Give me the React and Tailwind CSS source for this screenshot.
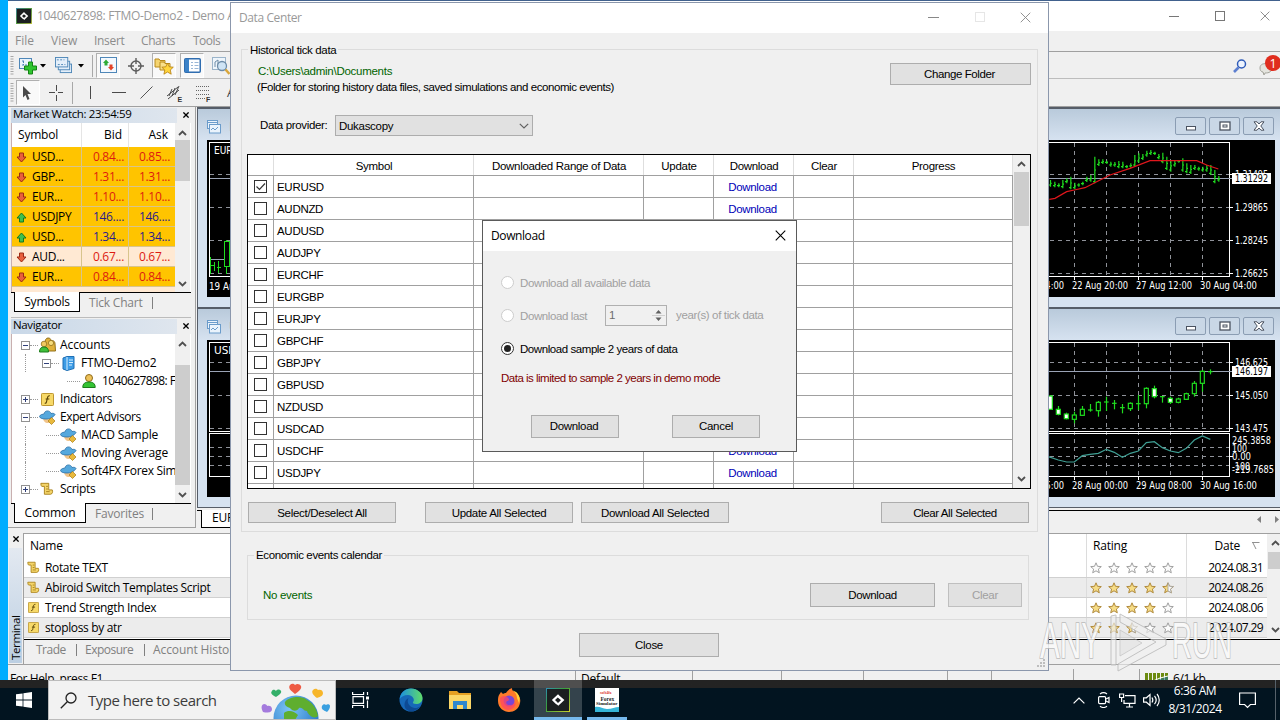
import React from 'react';
import clsx from 'clsx';

const symbols = [
  'EURUSD', 'AUDNZD', 'AUDUSD', 'AUDJPY', 'EURCHF', 'EURGBP', 'EURJPY', 'GBPCHF',
  'GBPJPY', 'GBPUSD', 'NZDUSD', 'USDCAD', 'USDCHF', 'USDJPY', '',
];

const quotes = [
  { symbol: 'USD...', bid: '0.84...', ask: '0.85...', up: false },
  { symbol: 'GBP...', bid: '1.31...', ask: '1.31...', up: false },
  { symbol: 'EUR...', bid: '1.10...', ask: '1.10...', up: false },
  { symbol: 'USDJPY', bid: '146....', ask: '146....', up: true },
  { symbol: 'USD...', bid: '1.34...', ask: '1.34...', up: true },
  { symbol: 'AUD...', bid: '0.67...', ask: '0.67...', up: false, pale: true },
  { symbol: 'EUR...', bid: '0.84...', ask: '0.84...', up: false },
];

const scripts = [
  { name: 'Rotate TEXT', kind: 'script', stars: 0, date: '2024.08.31' },
  { name: 'Abiroid Switch Templates Script', kind: 'script', stars: 4.5, date: '2024.08.26' },
  { name: 'Trend Strength Index', kind: 'indicator', stars: 4, date: '2024.08.06' },
  { name: 'stoploss by atr', kind: 'indicator', stars: 2.5, date: '2024.07.29' },
];

// [x, high, low] in thirds of a pixel
const bars = [
  [60, 540, 560], [73, 545, 562], [85, 550, 562], [97, 540, 565], [109, 535, 550], [121, 530, 568],
  [133, 548, 568], [145, 550, 560], [157, 545, 556], [169, 530, 546], [181, 525, 545], [193, 470, 550],
  [205, 478, 498], [217, 478, 492], [229, 482, 492], [241, 485, 500], [253, 486, 500], [265, 483, 505],
  [277, 485, 505], [289, 495, 505], [301, 490, 503], [313, 465, 500], [325, 460, 488], [337, 462, 480],
  [349, 452, 470], [361, 450, 465], [373, 455, 465], [385, 462, 478], [397, 458, 490], [409, 470, 510],
  [421, 480, 515], [433, 482, 500], [445, 480, 488], [457, 475, 515], [469, 490, 520], [481, 495, 522],
  [493, 495, 510], [505, 500, 512], [517, 500, 515], [529, 495, 515], [541, 495, 525], [553, 510, 550],
  [565, 528, 545],
];

// [x, high, low, bodyTop, bodyBottom, filled]
const candles = [
  [61, 286, 328, 288, 328, 1], [85, 318, 346, 328, 343, 1], [109, 338, 358, 342, 356, 1],
  [133, 335, 370, 345, 358, 0], [157, 318, 347, 328, 346, 0], [181, 312, 335, 330, 330, 0],
  [205, 303, 350, 307, 332, 0], [229, 290, 333, 306, 306, 0], [253, 300, 328, 310, 310, 0],
  [277, 312, 340, 323, 323, 0], [301, 307, 333, 310, 326, 0], [325, 285, 330, 311, 311, 0],
  [349, 262, 325, 265, 311, 0], [373, 257, 295, 266, 290, 1], [397, 288, 308, 290, 290, 0],
  [421, 290, 312, 295, 307, 1], [445, 293, 310, 297, 307, 0], [469, 278, 300, 281, 298, 0],
  [493, 243, 290, 250, 281, 0], [517, 210, 275, 214, 250, 0], [541, 208, 223, 215, 215, 0],
];

function Btn({ children, className }) {
  return (
    <button
      type="button"
      className={clsx(
        'flex shrink-0 items-center justify-center border border-[#adadad] bg-[#e1e1e1] pt-0.5 leading-none',
        className,
      )}
    >
      {children}
    </button>
  );
}

function Chevron({ down, className }) {
  return (
    <svg viewBox="0 0 9 6" className={clsx('h-1.5 w-[9px]', className)} fill="none" stroke="#505050" strokeWidth="1.8">
      <path d={down ? 'M1 1l3.5 3.5L8 1' : 'M1 5l3.5-3.5L8 5'} />
    </svg>
  );
}

function CloseGlyph({ size = 'size-3', color = '#000', width = 1 }) {
  return (
    <svg viewBox="0 0 12 12" className={size} stroke={color} strokeWidth={width} fill="none">
      <path d="M.8.8l10.4 10.4M11.2.8L.8 11.2" />
    </svg>
  );
}

function AppLogo({ className }) {
  return (
    <svg viewBox="0 0 24 24" className={className}>
      <defs>
        <linearGradient id="rim" x1="0" x2="1" y1="0" y2="1">
          <stop offset="0" stopColor="#2e8fb0" />
          <stop offset=".4" stopColor="#39a03c" />
          <stop offset="1" stopColor="#c6cf2c" />
        </linearGradient>
      </defs>
      <rect x=".5" y=".5" width="23" height="23" fill="#1b1f20" stroke="url(#rim)" />
      <path d="M12.800 7L7.500 12l3.700 3.700M12.500 8.500l4.200 3.500-5.200 5" fill="none" stroke="#fff" strokeWidth="2.300" />
    </svg>
  );
}

/* ---------- toolbar ---------- */

function Grip() {
  return (
    <svg viewBox="0 0 4 20" className="mx-[2px] h-5 w-1 shrink-0" stroke="#a6a6a6" strokeDasharray="1 1.5">
      <path d="M2 0v20" strokeWidth="3" />
    </svg>
  );
}

function Tool({ width, pressed, children }) {
  return (
    <div
      className={clsx(
        'flex h-[25px] shrink-0 items-center justify-center',
        width,
        pressed && 'border border-t-[#b0b0b0] border-l-[#b0b0b0] border-r-white border-b-white bg-[#f9f9f9]',
      )}
    >
      {children}
    </div>
  );
}

function Caret() {
  return (
    <svg viewBox="0 0 6 4" className="h-1 w-1.5 shrink-0">
      <path d="M0 0h6L3 3.6z" fill="#000" />
    </svg>
  );
}

function Toolbars() {
  return (
    <div className="flex h-[54px] shrink-0 flex-col bg-[#f0f0f0]">
      <div className="flex h-[27px] items-center border-b border-[#bdbdbd] pt-px">
        <Grip />
        <Tool width="w-[23px]">
          <svg viewBox="0 0 18 18" className="size-[18px]">
            <rect x=".5" y="1.5" width="12" height="10" fill="#eaf3fb" stroke="#4f87b8" />
            <path d="M3 4h3M3 8h6M4.500 4v4" stroke="#4f87b8" strokeDasharray="2 1" />
            <path d="M9.500 5h4v4h4v4h-4v4h-4v-4h-4V9h4z" fill="#2fc52f" stroke="#138313" />
          </svg>
        </Tool>
        <Tool width="w-2"><Caret /></Tool>
        <Tool width="w-[26px]">
          <svg viewBox="0 0 18 18" className="ml-1.5 size-[17px]" fill="#e4effa" stroke="#4f87b8">
            <rect x="5.500" y="7.500" width="12" height="9" />
            <rect x="3.500" y="4.500" width="12" height="9" />
            <rect x=".5" y=".5" width="13" height="10" />
            <path d="M2 3h8M3 8h8" strokeDasharray="2 1.500" />
          </svg>
        </Tool>
        <Tool width="w-[15px]"><Caret /></Tool>
        <div className="mr-[3px] ml-1 h-[22px] w-px shrink-0 bg-[#a8a8a8]" />
        <Tool width="w-6" pressed>
          <svg viewBox="0 0 17 17" className="size-[17px]">
            <rect x=".5" y=".5" width="16" height="15" fill="#f4f9ff" stroke="#4f87b8" />
            <path d="M6 2.500L9 6H7.500v2.500h-3V6H3z" fill="#2dab38" />
            <path d="M11 13.500L14 10h-1.500V7.500h-3V10H8z" fill="#e2452b" />
          </svg>
        </Tool>
        <Tool width="w-[32px]">
          <svg viewBox="0 0 16 16" className="size-4" fill="none" stroke="#5c5c5c" strokeWidth="1.400">
            <circle cx="8" cy="8" r="5" />
            <path d="M8 0v6M8 10v6M0 8h6M10 8h6" />
          </svg>
        </Tool>
        <Tool width="w-6" pressed>
          <svg viewBox="0 0 20 18" className="h-[18px] w-5">
            <path d="M1 2h4l1 1.500h5V10H1z" fill="#f5d470" stroke="#b88a1c" />
            <path d="M6 5h4l1 1.500h5V13H6z" fill="#fae08a" stroke="#b88a1c" />
            <path d="M13.500 6l1.800 3.800 4 .4-3 2.800.9 4.200-3.700-2.200-3.600 2.200.9-4.200-3-2.800 4-.4z" fill="#ffd53d" stroke="#b57f10" strokeWidth=".8" />
          </svg>
        </Tool>
        <div className="w-1 shrink-0" />
        <Tool width="w-6" pressed>
          <svg viewBox="0 0 17 15" className="h-[15px] w-[17px]">
            <rect x=".75" y=".75" width="15.500" height="13.500" rx="1" fill="#fff" stroke="#2f6db0" strokeWidth="1.500" />
            <path d="M1 1h4v13H1z" fill="#3b82c8" />
            <path d="M7 4.500h2M7 7.500h2M7 10.500h2M10.500 4.500h4M10.500 7.500h4M10.500 10.500h4" stroke="#9ab7d6" />
          </svg>
        </Tool>
        <Tool width="w-[34px]">
          <svg viewBox="0 0 18 18" className="size-[18px]">
            <rect x=".5" y=".5" width="13" height="12" fill="#eef5fb" stroke="#9bb4ca" />
            <path d="M3 10V5l3-2v6" fill="none" stroke="#6d8ca8" />
            <circle cx="10" cy="9" r="4.500" fill="#cfe4f5" stroke="#6d8ca8" strokeWidth="1.300" />
            <path d="M13.500 12.500l4 4.500" stroke="#d9a63a" strokeWidth="2.500" />
          </svg>
        </Tool>
        <div className="ml-auto flex w-[47px] shrink-0 items-center">
          <svg viewBox="0 0 14 14" className="size-3.5" fill="none">
            <path d="M5.500 8.500L1 13" stroke="#5d7fd0" strokeWidth="2.600" />
            <circle cx="8.500" cy="5" r="4" stroke="#2f5bb8" strokeWidth="1.500" fill="#eef4ff" />
          </svg>
          <svg viewBox="0 0 21 22" className="ml-3 h-[22px] w-[21px]">
            <path d="M1 13c0-4 4-5 8-4l4 3c0 5-3 6-7 6l-1 2-1-3c-2 0-3-2-3-4z" fill="#e4e4de" stroke="#a3a39b" />
            <circle cx="14" cy="8" r="8" fill="#e02d1e" />
            <text x="10.500" y="12.500" fontSize="12.500" fill="#fff" fontFamily="Open Sans, sans-serif">1</text>
          </svg>
        </div>
      </div>
      <div className="flex h-[27px] items-center">
        <Grip />
        <Tool width="w-6" pressed>
          <svg viewBox="0 0 12 16" className="-ml-1 h-4 w-3">
            <path d="M3 1l8 8H7.500l2 5-2 1-2-5L3 12.500z" fill="#4a4a4a" />
          </svg>
        </Tool>
        <Tool width="w-8">
          <svg viewBox="0 0 16 16" className="size-4" stroke="#4a4a4a">
            <path d="M8.500 0v6M8.500 10v6M1 7.500h6M10 7.500h5" />
          </svg>
        </Tool>
        <div className="h-[22px] w-px shrink-0 bg-[#a8a8a8]" />
        <Tool width="w-8"><div className="ml-0.5 h-[13px] w-px bg-[#4a4a4a]" /></Tool>
        <Tool width="w-[27px]"><div className="h-px w-3.5 bg-[#4a4a4a]" /></Tool>
        <Tool width="w-7">
          <svg viewBox="0 0 13 13" className="ml-px size-[13px]" stroke="#555"><path d="M.5 12.500l12-12" /></svg>
        </Tool>
        <Tool width="w-[27px]">
          <svg viewBox="0 0 17 18" className="ml-0.5 h-[18px] w-[17px]" stroke="#4a4a4a" fill="none">
            <path d="M1 12L12 3M2 15l11-9M3 12l3-7M6 12l3-8M9 11l4-9" />
            <text x="11.500" y="17.500" fontSize="7" fill="#333" stroke="none" fontWeight="bold" fontFamily="Liberation Sans, sans-serif">E</text>
          </svg>
        </Tool>
        <Tool width="w-[28px]">
          <svg viewBox="0 0 15 18" className="ml-1 h-[18px] w-[15px]" stroke="#666">
            <path d="M0 2.500h14M0 6.500h14M0 10.500h14M0 14.500h9" strokeDasharray="1 1" />
            <text x="10" y="17.500" fontSize="7" fill="#333" stroke="none" fontWeight="bold" fontFamily="Liberation Sans, sans-serif">F</text>
          </svg>
        </Tool>
        <span className="ml-3 font-['Open_Sans',sans-serif] text-[13px] text-[#444]">A</span>
      </div>
    </div>
  );
}

/* ---------- left docks ---------- */

function DockHeader({ children }) {
  return (
    <div className="flex h-4 shrink-0 items-center justify-between pr-0.5">
      <div className="flex h-[15px] w-[166px] items-center bg-gradient-to-r from-[#c9d8e8] to-[#dfe6ee] pb-0.5 pl-0.5">
        <span className="text-[11.5px] leading-none tracking-[-0.35px]">{children}</span>
      </div>
      <CloseGlyph size="size-[6px]" width={2.6} />
    </div>
  );
}

function DockTabs({ active, other, width, gap, tracking }) {
  return (
    <div className="flex h-[21px] shrink-0 items-start">
      <div className="w-[3px] border-t border-black" />
      <div className={clsx('flex h-5 items-center justify-center border border-t-0 border-black bg-white', width, tracking)}>{active}</div>
      <div className="flex h-5 flex-1 items-center border-t border-black text-[#808080]">
        <span className={clsx('tracking-[-0.2px]', gap)}>{other}</span>
        <span className="mr-[38px] ml-auto h-3 w-px bg-[#808080]" />
      </div>
    </div>
  );
}

function Scroll({ thumb }) {
  return (
    <div className="flex w-[15px] shrink-0 flex-col items-center bg-[#f0f0f0] pt-[7px] pb-[5px]">
      <Chevron />
      <div className={clsx('w-[15px] bg-[#cdcdcd]', thumb)} />
      <Chevron down className="mt-auto" />
    </div>
  );
}

function QuoteArrow({ up }) {
  return (
    <svg viewBox="0 0 11 11" className={clsx('mt-px size-[11px]', up && 'rotate-180')}>
      <path d="M3.500 1h4v4H10L5.500 10 1 5h2.500z" fill={up ? '#3fbf4f' : '#e8603c'} stroke={up ? '#14791f' : '#9c2a14'} />
    </svg>
  );
}

function MarketWatch() {
  return (
    <div className="flex h-[206px] shrink-0 flex-col">
      <DockHeader>Market Watch: 23:54:59</DockHeader>
      <div className="flex h-[169px] border-l border-[#c8b0b0] bg-white">
        <div className="w-[163px] overflow-hidden">
          <div className="flex h-6 items-center">
            <span className="w-[69px] pl-1.5 tracking-[-0.2px]">Symbol</span>
            <span className="flex h-full w-[47px] items-center justify-end border-l border-[#e5e5e5] pr-1.5">Bid</span>
            <span className="flex h-full w-[47px] items-center justify-end border-l border-[#e5e5e5] pr-[7px]">Ask</span>
          </div>
          {quotes.map((q, i) => (
            <div
              key={i}
              className={clsx(
                'flex h-5 items-center border-b border-[#d8c48c]',
                q.pale ? 'bg-[#ffe9d3]' : 'bg-[#ffc400]',
                q.up ? 'text-[#2b1a8c]' : 'text-[#dd1a10]',
              )}
            >
              <span className="flex w-[69px] items-center pl-1 tracking-[-0.3px] text-black">
                <QuoteArrow up={q.up} />
                <span className="ml-[5px]">{q.symbol}</span>
              </span>
              <span className="flex h-full w-[47px] items-center justify-end border-l border-[#d8c48c] pr-1 tracking-[-0.3px]">{q.bid}</span>
              <span className="flex h-full w-[47px] items-center justify-end border-l border-[#d8c48c] pr-[5px] tracking-[-0.3px]">{q.ask}</span>
            </div>
          ))}
          <div className="h-5 bg-[#ffe9d3]" />
        </div>
        <Scroll thumb="h-[41px] mt-[4px]" />
      </div>
      <DockTabs active="Symbols" other="Tick Chart" width="w-[66px]" gap="ml-[9px]" tracking="tracking-[-0.2px]" />
    </div>
  );
}

function Hat() {
  return (
    <svg viewBox="0 0 17 16" className="h-4 w-[17px]">
      <path d="M4 8c0 4 2 6 5 6s4-3 4-6z" fill="#f1c48a" />
      <path d="M.5 7.500C1.500 5 3.500 5.500 5 5c.5-4 6-4 7-.5 2-.5 3.500 0 4 1-2 3.500-6 4.500-9 4.500s-6-.5-6.500-2.500z" fill="#55a8dd" stroke="#2a6fa6" strokeWidth=".8" />
      <path d="M12.500 8.500l3.500 3.500-3.500 3.500L9 12z" fill="#e9b93c" stroke="#a97b12" strokeWidth=".7" />
    </svg>
  );
}

function Scroller({ className = 'size-[14px]' }) {
  return (
    <svg viewBox="0 0 16 16" className={className}>
      <path d="M1 1.500h9V9h4c1 2 0 5-2 5H5V5H2C1 4 1 2.500 1 1.500z" fill="#f3d46a" stroke="#a57c12" />
      <path d="M7 5h2M7 8h2M7 11h4" stroke="#a57c12" />
    </svg>
  );
}

function IndicatorIcon({ className = 'size-[13px]' }) {
  return (
    <svg viewBox="0 0 14 14" className={className}>
      <rect x=".5" y=".5" width="13" height="13" rx="1" fill="#f7d968" stroke="#b58d22" />
      <path d="M9.500 3C7 2.500 7 5 6.500 7S6 11.500 4 11M5 6.500h4" fill="none" stroke="#5c4508" strokeWidth="1.200" />
    </svg>
  );
}

function People() {
  return (
    <svg viewBox="0 0 17 16" className="h-4 w-[17px]">
      <path d="M6 6c0-3 1-5 3-5s3 1 3 3c2-1 4 0 4 3l.5 7H6z" fill="#e0b13a" stroke="#92701a" />
      <circle cx="12" cy="6" r="2.600" fill="#f6dc7c" stroke="#92701a" strokeWidth=".8" />
      <circle cx="5" cy="7" r="2.800" fill="#f0c860" stroke="#92701a" strokeWidth=".8" />
      <path d="M.5 15c0-3.500 1.500-5 4.500-5s4.500 1.500 4.500 5z" fill="#3fbf3a" stroke="#1c7d1a" />
    </svg>
  );
}

function Person() {
  return (
    <svg viewBox="0 0 14 16" className="h-4 w-3.5">
      <circle cx="7" cy="5" r="3.500" fill="#eec25a" stroke="#8f6a1b" />
      <path d="M.8 14.500C.8 10.500 3 9 7 9s6.200 1.500 6.200 5.500z" fill="#35c334" stroke="#1c7d1a" />
    </svg>
  );
}

function Server() {
  return (
    <svg viewBox="0 0 13 15" className="h-[15px] w-[13px]">
      <path d="M1 2l4-1.500h7v12L5 14.500 1 13z" fill="#3d9ce6" stroke="#1f6fb4" />
      <path d="M5 1v13M7 4h4M7 6.500h4M7 9h3" stroke="#d8efff" />
    </svg>
  );
}

const tree = [
  { label: 'Accounts', level: 0, icon: People, box: '-', tracking: 'tracking-[-0.1px]' },
  { label: 'FTMO-Demo2', level: 1, icon: Server, box: '-', tracking: 'tracking-[-0.2px]' },
  { label: '1040627898: FTMO', level: 2, icon: Person, tracking: 'tracking-[-0.6px]' },
  { label: 'Indicators', level: 0, icon: IndicatorIcon, box: '+', tracking: 'tracking-[-0.35px]' },
  { label: 'Expert Advisors', level: 0, icon: Hat, box: '-', tracking: 'tracking-[-0.4px]' },
  { label: 'MACD Sample', level: 1, icon: Hat, tracking: 'tracking-[-0.2px]' },
  { label: 'Moving Average', level: 1, icon: Hat, tracking: 'tracking-[-0.15px]' },
  { label: 'Soft4FX Forex Simulator', level: 1, icon: Hat, tracking: 'tracking-[-0.3px]' },
  { label: 'Scripts', level: 0, icon: Scroller, box: '+', tracking: 'tracking-[-0.3px]' },
];

function TreeBox({ mark }) {
  return (
    <svg viewBox="0 0 9 9" className="size-[9px] shrink-0" shapeRendering="crispEdges">
      <rect x=".5" y=".5" width="8" height="8" fill="#fff" stroke="#919191" />
      <path d={mark === '+' ? 'M2 4.500h5M4.500 2v5' : 'M2 4.500h5'} stroke="#30407a" />
    </svg>
  );
}

function Navigator() {
  return (
    <div className="flex h-[209px] shrink-0 flex-col border-t border-[#bcbcbc]">
      <DockHeader>Navigator</DockHeader>
      <div className="flex h-[169px] border-l border-[#c8b0b0] bg-white">
        <div className="w-[163px] overflow-hidden pt-0.5">
          {tree.map(({ label, level, icon: Icon, box, tracking }) => (
            <div key={label} className="flex h-[18px] items-center pl-[9px] whitespace-nowrap">
              {level > 0 && <span className={clsx('ml-1 h-full shrink-0', level === 1 ? 'w-[17px]' : 'w-[38px]', level === 1 && 'border-l border-dotted border-[#999]')} />}
              <span className="flex w-[17px] shrink-0 items-center">
                {box ? <TreeBox mark={box} /> : <span className="w-1" />}
                <span className="flex-1 border-t border-dotted border-[#999]" />
              </span>
              <span className="flex w-[18px] shrink-0 justify-center"><Icon /></span>
              <span className={clsx('ml-1', tracking)}>{label}</span>
            </div>
          ))}
        </div>
        <Scroll thumb="h-[120px] mt-[18px]" />
      </div>
      <DockTabs active="Common" other="Favorites" width="w-[72px]" gap="ml-[9px]" tracking="tracking-[-0.1px]" />
    </div>
  );
}

/* ---------- chart windows ---------- */

function Label({ x, y, w, children, fill = '#fff' }) {
  return (
    <text x={x} y={y} textLength={w} lengthAdjust="spacingAndGlyphs" fontSize="10.5" fill={fill} fontFamily="DejaVu Sans Condensed, Open Sans, sans-serif">
      {children}
    </text>
  );
}

function ChartTitle({ letter }) {
  return (
    <div className="flex h-[31px] shrink-0 items-center bg-gradient-to-b from-[#b9cadb] to-[#d6e2f0] pr-[1px] pl-[9px]">
      <svg viewBox="0 0 14 14" className="mt-1 size-3.5" fill="#eaf3fc" stroke="#6b9ccb">
        <rect x=".5" y=".5" width="10" height="8" />
        <rect x="2.500" y="4.500" width="11" height="8.500" />
        <path d="M1 2.500h9M4 10l2-2 2 2 3-3" />
      </svg>
      <span className="mt-1 ml-2 text-[#8796a6]">{letter}</span>
      <div className="mt-0.5 ml-auto flex gap-[3px] pr-[5px]">
        {['min', 'max', 'close'].map((kind) => (
          <div key={kind} className="flex h-[18px] w-[31px] items-center justify-center rounded-[2px] border border-[#8b9db3] bg-[#c9d7e6]">
            <svg viewBox="0 0 12 10" className="h-2.5 w-3" fill="#fff" stroke="#4a5260">
              {kind === 'min' && <rect x="1.500" y="5.500" width="9" height="3.500" />}
              {kind === 'max' && <><rect x="1" y="1" width="10" height="8" strokeWidth="1.300" /><rect x="4" y="4" width="4" height="2" /></>}
              {kind === 'close' && <path d="M1 .8h3l2 2.200 2-2.200h3L7.800 5 11 9.200H8L6 7 4 9.200H1L4.200 5z" />}
            </svg>
          </div>
        ))}
      </div>
    </div>
  );
}

function Grid({ rows, top, bottom }) {
  return (
    <g stroke="#8f9299" strokeDasharray="4 4">
      {[1074.5, 1106.5, 1138.5, 1170.5, 1202.5].map((x) => <path key={x} d={`M${x} ${top}V${bottom}`} />)}
      {rows.map((y) => <path key={y} d={`M210 ${y}H1230`} />)}
    </g>
  );
}

function BarChart() {
  return (
    <svg viewBox="207 140 1068 157" className="h-[157px] w-[1068px] bg-black" fill="none">
      <g shapeRendering="crispEdges">
        <Grid rows={[174.5, 207.5, 240.5, 273.5]} top={143} bottom={276} />
        <path d="M209.500 276.500V142.500H1229.500V276.500z" stroke="#fff" />
        <path d="M210 178.500H1232" stroke="#9aa3b5" />
        <path d="M1230 174.500h3M1230 207.500h3M1230 240.500h3M1230 273.500h3M1074.500 277v3M1138.500 277v3M1202.500 277v3" stroke="#fff" />
        <path d="M210 259.500h21" stroke="#9aa3b5" />
        <path d="M210.500 257v17M214.500 262v9M218.500 261v12M210 265.500h4M217 267.500h4M226.500 240v34" stroke="#1fdc1f" />
        <rect x="224.500" y="241.500" width="5" height="25" fill="#000" stroke="#1fdc1f" />
      </g>
      <g transform="translate(1030 0) scale(.33333)" stroke="#1fdc1f" strokeWidth="3.600">
        {bars.map(([x, hi, lo]) => (
          <path key={x} d={`M${x + 1.5} ${hi}V${lo}M${x - 4} ${lo - 5}H${x}M${x} ${(hi + lo) / 2}h5`} />
        ))}
        <path d="M58 598L75 595 110 575 133 570 165 563 200 545 240 525 300 505 360 482H500L530 495 565 507" stroke="#e0161c" />
      </g>
      <Label x={214} y={154} w={38}>EURUSD</Label>
      <Label x={209} y={290} w={56}>19 Aug 2024</Label>
      <Label x={1235} y={178} w={33}>1.31495</Label>
      <rect x="1232" y="173" width="39" height="11" fill="#fff" />
      <Label x={1235} y={182} w={33} fill="#000">1.31292</Label>
      <Label x={1235} y={211} w={33}>1.29865</Label>
      <Label x={1235} y={244} w={33}>1.28245</Label>
      <Label x={1235} y={277} w={33}>1.26625</Label>
      <Label x={1008} y={289} w={56}>19 Aug 04:00</Label>
      <Label x={1072} y={289} w={56}>22 Aug 20:00</Label>
      <Label x={1136} y={289} w={56}>27 Aug 12:00</Label>
      <Label x={1200} y={289} w={57}>30 Aug 04:00</Label>
    </svg>
  );
}

function CandleChart() {
  return (
    <svg viewBox="207 340 1068 157" className="h-[157px] w-[1068px] bg-black" fill="none">
      <g shapeRendering="crispEdges">
        <Grid rows={[362.5, 395.5, 428.5, 447.5, 456.5, 465.5]} top={343} bottom={476} />
        <path d="M209.500 431.500V342.500H1229.500V431.500zM209.500 433.500H1229.500V476.500H209.500z" stroke="#fff" />
        <path d="M210 371.500H1232" stroke="#9aa3b5" />
        <path d="M1230 362.500h3M1230 395.500h3M1230 428.500h3M1230 456.500h3M1074.500 477v3M1138.500 477v3M1202.500 477v3" stroke="#fff" />
      </g>
      <g transform="translate(1030 300) scale(.33333)" stroke="#1fdc1f" strokeWidth="3.600">
        {candles.map(([x, hi, lo, top, bottom, filled]) => (
          <g key={x}>
            <path d={`M${x + 0.5} ${hi}V${lo}`} />
            {top === bottom ? (
              <path d={`M${x - 7} ${top}h14`} />
            ) : (
              <rect x={x - 6} y={top} width="12" height={bottom - top} fill={filled ? '#fff' : '#000'} />
            )}
          </g>
        ))}
        <path
          d="M55 470L85 480 110 486H133L157 467 180 463 205 460 229 448 253 457 277 472 301 460 325 453 349 428 373 425 397 443 421 453 445 458 469 445 493 420 517 408 541 418"
          stroke="#3f9f94"
        />
      </g>
      <Label x={214} y={354} w={38}>USDJPY</Label>
      <Label x={1235} y={366} w={33}>146.625</Label>
      <rect x="1232" y="366" width="39" height="11" fill="#fff" />
      <Label x={1235} y={375} w={33} fill="#000">146.197</Label>
      <Label x={1235} y={399} w={33}>145.050</Label>
      <Label x={1235} y={432} w={33}>143.475</Label>
      <Label x={1232} y={444} w={39}>245.3858</Label>
      <Label x={1232} y={452} w={15}>100</Label>
      <Label x={1232} y={460} w={19}>0.00</Label>
      <Label x={1232} y={470} w={18}>-100</Label>
      <Label x={1232} y={473} w={42}>-219.7685</Label>
      <Label x={1008} y={489} w={56}>26 Aug 16:00</Label>
      <Label x={1072} y={489} w={56}>28 Aug 00:00</Label>
      <Label x={1136} y={489} w={56}>29 Aug 08:00</Label>
      <Label x={1200} y={489} w={57}>30 Aug 16:00</Label>
    </svg>
  );
}

function ChartWindow({ letter, children }) {
  return (
    <div className="flex h-[200px] shrink-0 flex-col border-t-2 border-l border-[#565d68] bg-[#d6e2f0]">
      <ChartTitle letter={letter} />
      <div className="ml-[9px] flex">{children}</div>
    </div>
  );
}

/* ---------- terminal ---------- */

const STAR = 'M6 .8l1.500 3.500 3.800.3-2.900 2.500.9 3.700L6 8.800l-3.300 2 .9-3.700L.7 4.600l3.800-.3z';

function Star({ fill }) {
  return (
    <svg viewBox="0 0 12 12" className="size-3">
      <path d={STAR} fill={fill > 0 ? '#f6dc86' : '#fbfbfb'} stroke={fill > 0 ? '#b08a3c' : '#a0a0a0'} />
      {fill === 0.5 && <path d="M6 .8l1.500 3.500 3.800.3-2.900 2.500.9 3.700L6 8.800z" fill="#f8f8f8" stroke="#a0a0a0" strokeWidth=".8" />}
    </svg>
  );
}

function Terminal() {
  return (
    <div className="flex h-[132px] shrink-0 border-b border-[#a0a0a0]">
      <div className="flex w-[15px] shrink-0 flex-col items-center pt-[3px]">
        <CloseGlyph size="size-[6px]" width={2.6} />
        <div className="mt-1.5 flex h-[115px] w-[13px] rotate-180 items-center justify-start bg-gradient-to-b from-[#bccfe2] to-[#e3e9f1] leading-none [writing-mode:vertical-rl]">
          <span className="pt-[3px] text-[11.5px] tracking-[-0.35px]">Terminal</span>
        </div>
      </div>
      <div className="flex flex-1 flex-col border-t border-l border-[#a0a0a0]">
        <div className="flex h-[106px] shrink-0 border-b border-black">
          <div className="flex flex-1 flex-col bg-white">
            <div className="flex h-6 items-center">
              <span className="flex-1 pl-1.5 tracking-[-0.2px]">Name</span>
              <span className="flex h-full w-[100px] items-center border-l border-[#dcdcdc] pl-1.5 tracking-[-0.2px]">Rating</span>
              <span className="flex h-full w-[81px] items-center justify-end border-l border-[#dcdcdc] pr-[7px] tracking-[-0.2px]">
                Date
                <svg viewBox="0 0 8 8" className="ml-3 size-2" fill="none" stroke="#909090"><path d="M0 .5h7.500M1 1l3 6" /></svg>
              </span>
            </div>
            {scripts.map((s, i) => (
              <div key={s.name} className={clsx('flex h-5 items-center border-b border-[#d0d0d0]', i % 2 === 1 && 'bg-[#ececec]')}>
                <div className="flex flex-1 items-center pl-[3px]">
                  {s.kind === 'script' ? <Scroller className="size-[13px]" /> : <IndicatorIcon className="ml-px size-[11px]" />}
                  <span className={clsx('tracking-[-0.35px]', s.kind === 'script' ? 'ml-[5px]' : 'ml-1.5')}>{s.name}</span>
                </div>
                <div className="flex h-full w-[100px] items-center gap-1.5 border-l border-[#dcdcdc] pl-[3px]">
                  {[0, 1, 2, 3, 4].map((n) => <Star key={n} fill={Math.max(0, Math.min(1, s.stars - n))} />)}
                </div>
                <div className="flex h-full w-[81px] items-center justify-end border-l border-[#dcdcdc] pr-1 tracking-[-0.65px]">{s.date}</div>
              </div>
            ))}
          </div>
          <div className="flex w-[13px] shrink-0 flex-col items-center overflow-hidden bg-[#f0f0f0] py-1.5">
            <Chevron className="ml-1 shrink-0" />
            <div className="mt-1.5 h-[17px] w-3 bg-[#cdcdcd]" />
            <Chevron down className="mt-auto ml-1 shrink-0" />
          </div>
        </div>
        <div className="flex h-5 items-center pl-3 text-[#808080]">
          <span className="w-10 tracking-[-0.5px]">Trade</span>
          <span className="h-3 w-px bg-[#808080]" />
          <span className="ml-2 w-[59px] tracking-[-0.5px]">Exposure</span>
          <span className="h-3 w-px bg-[#808080]" />
          <span className="ml-2 tracking-[-0.1px]">Account History</span>
        </div>
      </div>
    </div>
  );
}

function StatusBar() {
  return (
    <div className="flex h-6 shrink-0 items-center pt-1 pl-0.5">
      <span className="w-[565px] tracking-[-0.4px]">For Help, press F1</span>
      <span className="flex h-5 w-[117px] items-center border-l border-[#a0a0a0] pl-[5px] tracking-[-0.2px]">Default</span>
      <span className="h-5 w-[89px] border-l border-[#a0a0a0]" />
      <span className="h-5 w-[82px] border-l border-[#a0a0a0]" />
      <span className="h-5 w-[84px] border-l border-[#a0a0a0]" />
      <span className="h-5 w-[44px] border-l border-[#a0a0a0]" />
      <span className="h-5 w-[82px] border-l border-[#a0a0a0]" />
      <span className="h-5 w-[66px] border-l border-[#a0a0a0]" />
      <span className="flex h-5 items-center border-l border-[#a0a0a0] pl-[5px]">
        <svg viewBox="0 0 23 12" className="h-3 w-[23px]">
          <path d="M1.500 0v12M5.500 0v12M9.500 0v12M13.500 0v12M17.500 0v12M21.500 0v12" stroke="#6b8a10" strokeWidth="3" />
          <path d="M0 9l8-1 7-2 8-3v9H0z" fill="#1e6f8c" opacity=".6" />
          <path d="M0 9l8-1 7-3 8-2" stroke="#fff" fill="none" />
        </svg>
        <span className="ml-[5px] tracking-[-0.4px]">6/1 kb</span>
      </span>
    </div>
  );
}

function MainWindow() {
  return (
    <div className="absolute top-0 left-2 flex h-[690px] w-[1272px] flex-col overflow-hidden border-t border-[#41618d] bg-[#f0f0f0] font-['Open_Sans',sans-serif] text-[12px] text-black">
      <div className="flex h-[30px] shrink-0 items-center bg-white pl-2 text-[#999]">
        <AppLogo className="size-4" />
        <span className="ml-[5px] tracking-[-0.3px]">1040627898: FTMO-Demo2 - Demo Account</span>
        <div className="ml-auto flex w-[111px] items-center justify-between pr-2.5">
          <span className="h-px w-2.5 bg-[#777]" />
          <span className="size-2.5 border border-[#777]" />
          <CloseGlyph size="size-2.5" color="#777" />
        </div>
      </div>
      <div className="flex h-[21px] shrink-0 items-center border-b border-[#a0a0a0] pl-[7px] text-[#8c8c8c]">
        <span className="w-9">File</span>
        <span className="w-[43px]">View</span>
        <span className="w-[47px] tracking-[-0.3px]">Insert</span>
        <span className="w-[52px] tracking-[-0.4px]">Charts</span>
        <span className="tracking-[-0.5px]">Tools</span>
      </div>
      <Toolbars />
      <div className="flex h-[422px] shrink-0 border-t border-[#a0a0a0]">
        <div className="flex w-[188px] shrink-0 flex-col gap-1 border-r border-b border-[#a0a0a0] pr-1 pl-[3px]">
          <MarketWatch />
          <Navigator />
        </div>
        <div className="flex w-[1084px] shrink-0 flex-col bg-[#f0f0f0] pl-px">
          <ChartWindow letter="EURUSD">
            <BarChart />
          </ChartWindow>
          <ChartWindow letter="USDJPY">
            <CandleChart />
          </ChartWindow>
          <div className="h-px bg-[#565d68]" />
          <div className="mt-0.5 flex h-[19px] items-start">
            <div className="w-1 border-t border-black" />
            <div className="flex h-[18px] w-[90px] items-center border border-t-0 border-black bg-white pl-[10px] tracking-[-0.2px]">EURUSD,H4</div>
            <div className="flex h-[18px] flex-1 items-center justify-end gap-3.5 border-t border-black">
              <svg viewBox="0 0 4 7" className="h-[7px] w-1"><path d="M4 0v7L0 3.500z" fill="#808080" /></svg>
              <svg viewBox="0 0 4 7" className="mr-px h-[7px] w-1"><path d="M0 0v7l4-3.500z" fill="#808080" /></svg>
            </div>
          </div>
        </div>
      </div>
      <div className="h-[5px] shrink-0" />
      <Terminal />
      <StatusBar />
    </div>
  );
}

/* ---------- Data Center dialog ---------- */

function SymbolTable() {
  return (
    <div className="flex h-[335px] border border-black bg-white">
      <div className="w-[765px] overflow-hidden">
        <div className="flex h-[21px] items-center border-b border-[#a0a0a0] text-center [&>span]:flex [&>span]:h-full [&>span]:items-center [&>span]:justify-center [&>span]:border-r [&>span]:border-[#dedede] [&>span]:pt-[3px] [&>span]:pl-px">
          <span className="w-[26px]" />
          <span className="w-[200px]">Symbol</span>
          <span className="w-[170px]">Downloaded Range of Data</span>
          <span className="w-[70px]">Update</span>
          <span className="w-[80px]">Download</span>
          <span className="w-[60px]">Clear</span>
          <span className="w-[159px]">Progress</span>
        </div>
        {symbols.map((s, i) => (
          <div key={i} className="flex h-[22px] border-b border-[#a0a0a0] [&>div]:flex [&>div]:items-center [&>div]:border-r [&>div]:border-[#a0a0a0]">
            <div className="w-[26px] pl-[6px]">
              <span className="flex size-[13px] items-center justify-center border border-[#333] bg-white">
                {i === 0 && (
                  <svg viewBox="0 0 11 11" className="size-[11px]" fill="none" stroke="#333" strokeWidth="1.200"><path d="M1.500 5.500l3 3 5.500-6" /></svg>
                )}
              </span>
            </div>
            <div className="w-[200px] pt-0.5 pl-[3px]">{s}</div>
            <div className="w-[170px]" />
            <div className="w-[70px]" />
            <div className="w-[80px] justify-center pt-0.5 pr-0.5 text-[#0000b8]">{s && 'Download'}</div>
            <div className="w-[60px]" />
            <div className="w-[159px]" />
          </div>
        ))}
      </div>
      <div className="flex flex-1 flex-col items-center bg-[#f0f0f0] py-1.5">
        <Chevron />
        <div className="mt-[5px] h-[54px] w-[15px] bg-[#cdcdcd]" />
        <Chevron down className="mt-auto" />
      </div>
    </div>
  );
}

function DataCenter() {
  return (
    <div className="absolute top-[2px] left-[230px] flex h-[669px] w-[819px] flex-col border border-[#8b97ac] bg-[#f0f0f0] font-['Liberation_Sans',sans-serif] text-[11.5px] leading-none tracking-[-0.3px] text-black">
      <div className="flex h-[30px] shrink-0 items-center bg-white pl-2 text-[12px] text-[#999]">
        <span className="font-['Open_Sans',sans-serif] tracking-[-0.4px]">Data Center</span>
        <div className="mb-0.5 ml-auto flex w-[120px] items-center justify-between pr-[17px]">
          <span className="h-px w-[11px] bg-[#888]" />
          <span className="size-2.5 border border-[#e6e6e6]" />
          <CloseGlyph size="size-[11px]" color="#888" />
        </div>
      </div>
      <div className="mx-2.5 mt-[10px] flex flex-col">
        <div className="flex h-3 items-center">
          <span className="h-px w-[7px] bg-[#dcdcdc]" />
          <span className="px-0.5 pt-[3px] tracking-[-0.35px]">Historical tick data</span>
          <span className="h-px flex-1 bg-[#dcdcdc]" />
        </div>
        <div className="-mt-[6px] h-[483px] border border-t-0 border-[#dcdcdc] pt-[13px] pr-[6px] pl-[5px]">
          <div className="flex h-[92px]">
            <div className="flex flex-1 flex-col pl-[11px]">
              <span className="mt-[4px] tracking-[-0.27px] text-[#006400]">C:\Users\admin\Documents</span>
              <span className="mt-[4px] -ml-px tracking-[-0.43px]">(Folder for storing history data files, saved simulations and economic events)</span>
              <div className="mt-[22px] flex items-center">
                <span className="w-[77px] pl-0.5 tracking-[-0.35px]">Data provider:</span>
                <div className="flex h-[21px] w-[198px] items-center justify-between border border-[#adadad] bg-[#e1e1e1] px-[3px]">
                  <span className="pt-0.5">Dukascopy</span>
                  <svg viewBox="0 0 10 6" className="h-1.5 w-2.5" fill="none" stroke="#606060" strokeWidth="1.200"><path d="M.8.8L5 5 9.200.8" /></svg>
                </div>
              </div>
            </div>
            <Btn className="mt-px h-[22px] w-[141px] pr-0.5 tracking-[-0.4px]">Change Folder</Btn>
          </div>
          <div className="w-[784px]">
            <SymbolTable />
          </div>
          <div className="mt-[13px] flex pl-px">
            <Btn className="h-[21px] w-[148px]">Select/Deselect All</Btn>
            <Btn className="ml-[29px] h-[21px] w-[148px]">Update All Selected</Btn>
            <Btn className="ml-2 h-[21px] w-[148px]">Download All Selected</Btn>
            <Btn className="ml-[152px] h-[21px] w-[148px] tracking-[-0.4px]">Clear All Selected</Btn>
          </div>
        </div>
      </div>
      <div className="mt-[17px] ml-4 flex w-[782px] flex-col">
        <div className="flex h-3 items-center">
          <span className="h-px w-[7px] bg-[#dcdcdc]" />
          <span className="px-0.5 pt-px tracking-[-0.37px]">Economic events calendar</span>
          <span className="h-px flex-1 bg-[#dcdcdc]" />
        </div>
        <div className="-mt-[6px] flex h-[65px] items-center border border-t-0 border-[#dcdcdc] pt-4 pr-[6px] pl-[15px]">
          <span className="pt-0.5 text-[#006400]">No events</span>
          <Btn className="ml-auto h-6 w-[125px]">Download</Btn>
          <Btn className="ml-[13px] h-6 w-[74px] border-[#bfbfbf] bg-[#cccccc] text-[#a0a0a0]">Clear</Btn>
        </div>
      </div>
      <Btn className="mt-[13px] ml-[348px] h-6 w-[140px]">Close</Btn>
      <svg viewBox="0 0 9 9" className="mt-auto mr-0.5 mb-0.5 ml-auto size-[9px]" fill="#bdbdbd">
        <path d="M6 0h2v2H6zM6 3h2v2H6zM6 6h2v2H6zM3 3h2v2H3zM3 6h2v2H3zM0 6h2v2H0z" />
      </svg>
    </div>
  );
}

function Radio({ checked }) {
  return (
    <span className={clsx('mr-[6px] flex size-[13px] items-center justify-center rounded-full border bg-white', checked ? 'border-[#333]' : 'border-[#cccccc]')}>
      {checked && <span className="size-[7px] rounded-full bg-[#222]" />}
    </span>
  );
}

function DownloadDialog() {
  return (
    <div className="absolute top-[220px] left-[482px] flex h-[232px] w-[315px] flex-col border border-[#5a5a5a] bg-[#f0f0f0] font-['Liberation_Sans',sans-serif] text-[11.5px] leading-none tracking-[-0.3px] text-black">
      <div className="flex h-[30px] shrink-0 items-center justify-between bg-white pr-2.5 pl-2">
        <span className="font-['Open_Sans',sans-serif] text-[12px] tracking-[-0.4px]">Download</span>
        <CloseGlyph size="mb-px size-[11px]" width={1.2} />
      </div>
      <div className="flex flex-col pl-[18px]">
        <div className="mt-[15px] flex h-[33px] items-center text-[#a0a0a0]">
          <Radio />
          <span className="pt-0.5 tracking-[-0.37px]">Download all available data</span>
        </div>
        <div className="flex h-[33px] items-center text-[#a0a0a0]">
          <Radio />
          <span className="w-[85px] pt-0.5 tracking-[-0.4px]">Download last</span>
          <div className="flex h-[21px] w-[62px] items-center justify-between border border-[#b0b0b0] pl-[3px] text-[#6d6d6d]">
            1
            <svg viewBox="0 0 15 17" className="h-[17px] w-[15px]">
              <path d="M7.500 3l3 3.500h-6zM7.500 14l3-3.500h-6z" fill="#606060" />
              <path d="M1 8.500h13" stroke="#cfcfcf" />
            </svg>
          </div>
          <span className="ml-[9px] tracking-[-0.36px]">year(s) of tick data</span>
        </div>
        <div className="flex h-[33px] items-center">
          <Radio checked />
          <span className="pt-0.5 tracking-[-0.43px]">Download sample 2 years of data</span>
        </div>
        <span className="mt-[8px] tracking-[-0.5px] text-[#800000]">Data is limited to sample 2 years in demo mode</span>
        <div className="mt-[30px] flex gap-[53px] pl-[30px]">
          <Btn className="h-[23px] w-[88px] pr-0.5">Download</Btn>
          <Btn className="h-[23px] w-[88px]">Cancel</Btn>
        </div>
      </div>
    </div>
  );
}

function Watermark() {
  return (
    <svg viewBox="1036 610 200 66" className="absolute top-[610px] left-[1036px] h-[66px] w-[200px]" opacity=".8">
      <g fill="#fbfbfb" stroke="#b8b8b8" strokeLinejoin="round" fontFamily="Liberation Sans, sans-serif" fontSize="50">
        <g paintOrder="stroke" strokeWidth="2.200">
          <text x="1040" y="658" textLength="61" lengthAdjust="spacingAndGlyphs">ANY</text>
          <text x="1172" y="658" textLength="60" lengthAdjust="spacingAndGlyphs">RUN</text>
        </g>
        <path d="M1111 616l5-1v50h-5zM1120 614l46 25v6l-48 26v-7l38-22-36-20z" fill="#f0f0f0" fillOpacity=".8" />
        <path d="M1120 630l22 13-22 13z" fill="#dcdcdc" fillOpacity=".5" strokeWidth=".7" />
      </g>
    </svg>
  );
}

/* ---------- taskbar ---------- */

function Earth() {
  return (
    <svg viewBox="0 0 72 38" className="h-[38px] w-[72px]">
      <defs>
        <radialGradient id="sea" cx=".35" cy=".3" r=".8">
          <stop offset="0" stopColor="#7cc4f4" />
          <stop offset="1" stopColor="#1f6fc4" />
        </radialGradient>
      </defs>
      <circle cx="36" cy="37" r="22.500" fill="url(#sea)" />
      <path d="M25 21c4-5 16-7 22-2 7 4 10 10 11 16-4 4-10-1-11-5-4 0-4-4-8-3-2 4-7 3-9 0-3-1-6-3-5-6zM24 32c5-4 11-1 14 2l-3 5H24z" fill="#5fae2f" />
      <path d="M35 13c-5-4-7-6-5-9 2-2 4-1 5 0 2-2 5-1 6 1 1 3-2 5-6 8z" fill="#ee5b45" />
      <path d="M57 17c-4-3-6-6-4-8 2-2 4-1 5 0 2-1 5 0 5 3s-3 4-6 5z" fill="#f7b62a" />
      <path d="M16 16c-4-2-6-4-4-6 1-2 3-1 4 0 1-2 4-2 5 0s-2 4-5 6z" fill="#34b06a" />
      <path d="M3 31c-2-4-2-7 1-8 2 0 3 1 3 2 2-1 5 0 5 3 0 4-5 4-9 3z" fill="#a47bdd" />
      <path d="M67 31c-4-2-6-3-5-6 1-2 3-2 4-1 1-1 4-1 4 1s-1 4-3 6z" fill="#3aa0e0" />
    </svg>
  );
}

function Taskbar() {
  return (
    <div className="absolute top-[680px] left-0 flex h-10 w-full bg-gradient-to-b from-[#232323] from-20% to-[#021420] to-20% font-['Open_Sans',sans-serif] text-white">
      <div className="flex w-12 shrink-0 items-center justify-center">
        <svg viewBox="0 0 16 16" className="size-4" fill="#fff"><path d="M0 2.300L6.600 1.400v6.200H0zM7.400 1.300L16 0v7.600H7.400zM0 8.400h6.600v6.200L0 13.700zM7.400 8.400H16V16l-8.600-1.300z" /></svg>
      </div>
      <div className="flex w-72 shrink-0 items-center border border-[#bcbcbc] bg-[#f2f2f2] pl-[11px] text-[#3c3c3c]">
        <svg viewBox="0 0 17 17" className="size-[17px]" fill="none" stroke="#222" strokeWidth="1.300"><circle cx="11" cy="6" r="5" /><path d="M7.300 9.700L.8 16.200" /></svg>
        <span className="ml-[11px] text-[15px] tracking-[-0.5px]">Type here to search</span>
        <div className="mr-[3px] ml-auto self-end"><Earth /></div>
      </div>
      <div className="flex w-12 shrink-0 items-center justify-center">
        <svg viewBox="0 0 17 16" className="h-4 w-[17px]" fill="none" stroke="#fff" strokeWidth="1.200">
          <path d="M.6 0v2.500h11V0M.6 16v-2.500h11V16M1 4.600h10.500v6.800H1zM15.500 0v3M15.500 8.500V16" />
          <path d="M14 4.500h3v3h-3z" fill="#fff" stroke="none" />
        </svg>
      </div>
      <div className="flex w-[54px] shrink-0 items-center justify-center">
        <svg viewBox="0 0 24 24" className="size-6">
          <defs>
            <linearGradient id="edge" x1="0" x2="1">
              <stop offset="0" stopColor="#1b8fe0" />
              <stop offset="1" stopColor="#5fdc6a" />
            </linearGradient>
          </defs>
          <circle cx="12" cy="12" r="11.500" fill="#1668b8" />
          <path d="M.7 11C1.500 4.500 6.500.5 12 .5c6.500 0 11.500 4.500 11.500 9.500 0 4-3 6-6.500 6-2.500 0-3.500-1-3-2 1-1 1-2 .5-3.500C13.500 8.500 11.500 7 9 7 5 7 2 9 .7 11z" fill="url(#edge)" />
          <path d="M9.500 10c-2 4 0 9 6 10 2 .3 4-.5 5.500-1.500-3 4.500-9 6-13 3.500-4-3-3-10 1.500-12z" fill="#0d4a94" />
        </svg>
      </div>
      <div className="flex w-11 shrink-0 items-center justify-center">
        <svg viewBox="0 0 22 18" className="h-[18px] w-[22px]">
          <path d="M0 0h8l2 2h12v4H0z" fill="#e5a023" />
          <path d="M0 4h22v14H0z" fill="#fbd768" />
          <path d="M4 18V10h14v8h-4v-4H8v4z" fill="#2f87cf" />
        </svg>
      </div>
      <div className="flex w-[54px] shrink-0 items-center justify-center">
        <svg viewBox="0 0 24 24" className="size-6">
          <path d="M2 7l2-3 2 2c1-1 2-1 3-1 1-2 3-4 6-5-.5 2 1 3 3 4l2 1c2 3 4 5 3 10-1 6-6 9-11 9S1 20 1 13c0-2 0-4 1-6z" fill="#ff7a2a" />
          <path d="M15 0c0 3 5 4 5 10l2 5c2-6-1-9-3-11-2-1-4-2-4-4z" fill="#ffd43b" />
          <circle cx="12" cy="13" r="5.500" fill="#7a45d6" />
          <path d="M3 10c3-3 7-2 8 0 2 1 1 3-1 3-2 2 0 4 3 4 3 0 5-2 5-4 2 5-2 9-7 9S3 17 3 10z" fill="#ff4664" opacity=".75" />
        </svg>
      </div>
      <div className="-ml-0.5 flex w-12 shrink-0 flex-col items-center border-b-[3px] border-[#76b9ed] bg-white/20 pt-2">
        <AppLogo className="size-6" />
      </div>
      <div className="ml-[5px] flex w-10 shrink-0 flex-col items-center border-b-[3px] border-[#76b9ed] pt-2">
        <svg viewBox="0 0 24 24" className="size-6" fontFamily="Liberation Serif, serif" fontWeight="bold" fontSize="5.500">
          <rect width="24" height="24" fill="#fff" />
          <text x="5" y="6" fontSize="4" fill="#d33">soft4fx</text>
          <text x="5.500" y="12.500" fill="#222">Forex</text>
          <text x="1" y="17" fontSize="5" fill="#222">Simulator</text>
          <path d="M0 19c5-1 7 2 12 2s8-2 12-2v5H0z" fill="#35b5d8" />
        </svg>
      </div>
      <div className="ml-auto flex w-[210px] shrink-0 items-center">
        <svg viewBox="0 0 12 7" className="ml-[3px] h-[7px] w-3" fill="none" stroke="#fff" strokeWidth="1.200"><path d="M.6 6.400L6 1l5.400 5.400" /></svg>
        <svg viewBox="0 0 14 16" className="ml-3 h-4 w-3.5" fill="none" stroke="#fff" strokeWidth="1.200">
          <rect x="1.600" y="4.600" width="7" height="7" rx="1" />
          <path d="M9 7l3-1.500v5L9 9M3 2c2-1.500 5-1.500 7 0M3 14.200c2 1.500 5 1.500 7 0" />
        </svg>
        <svg viewBox="0 0 17 15" className="ml-2 h-[15px] w-[17px]" fill="none" stroke="#fff" strokeWidth="1.200">
          <path d="M6 2.600h10v7.800H5V7M10.500 10.500V14M7 14h7M.6 1h4v3.500h-4zM2.600 4.500V9" />
        </svg>
        <svg viewBox="0 0 17 14" className="ml-[7px] h-3.5 w-[17px]" fill="none" stroke="#fff" strokeWidth="1.200">
          <path d="M.6 4.800h2.800L7 1.500v11L3.400 9.200H.6zM9 4.500c1 1.500 1 3.500 0 5M11.500 2.800c2 2.500 2 6 0 8.400M14 1c3 3.500 3 8.500 0 12" />
        </svg>
        <div className="ml-[7px] flex w-[56px] flex-col items-center text-[12px] leading-[18px] tracking-[-0.4px] whitespace-nowrap">
          <span>6:36 AM</span>
          <span>8/31/2024</span>
        </div>
        <svg viewBox="0 0 17 17" className="ml-[16px] size-[17px]" fill="none" stroke="#fff" strokeWidth="1.200"><path d="M.6 1h15.800v11.500h-5L8.500 15.500 5.600 12.500h-5z" /></svg>
        <span className="ml-[19px] h-10 w-px bg-[#56616a]" />
      </div>
    </div>
  );
}

export default function App() {
  return (
    <div className="relative h-[720px] w-[1280px] overflow-hidden bg-[#00adff]">
      <MainWindow />
      <DataCenter />
      <DownloadDialog />
      <Watermark />
      <Taskbar />
    </div>
  );
}
